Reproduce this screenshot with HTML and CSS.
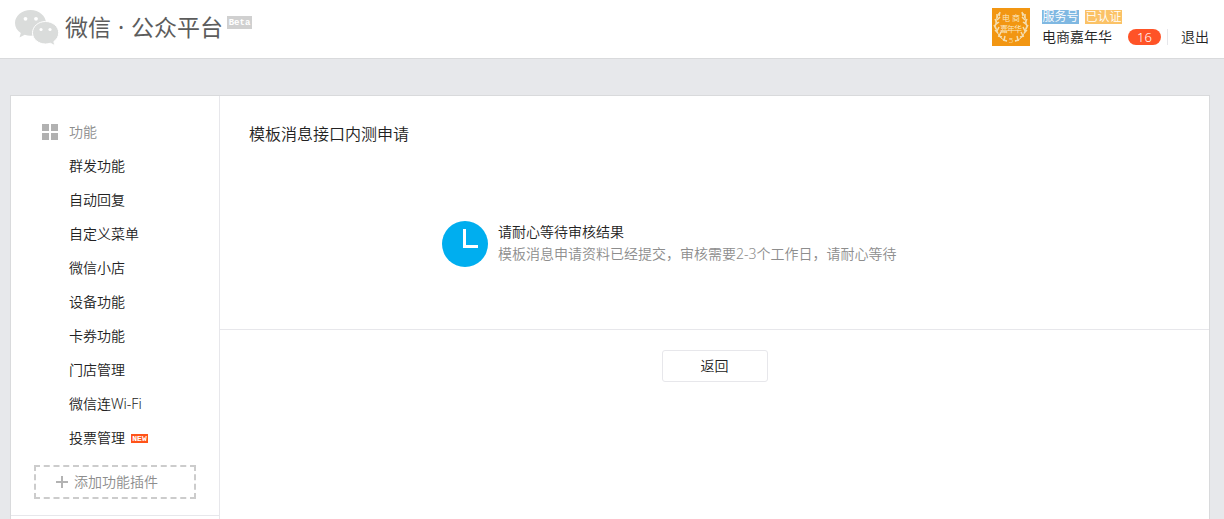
FILE: index.html
```html
<!DOCTYPE html>
<html lang="zh-CN">
<head>
<meta charset="utf-8">
<title>微信公众平台</title>
<link rel="stylesheet" href="styles.css">
</head>
<body>
<header class="header">
  <a class="logo" href="#">
    <svg class="logo-icon" viewBox="0 0 44 36" aria-hidden="true">
      <path fill="#dadcdb" d="M15.500 0C7 0 0 5.800 0 13c0 4.100 2.200 7.600 5.800 10L4.500 27.500l5.200-2.700c1.900.6 3.800.9 5.800.9C24 25.700 31 20 31 13S24 0 15.500 0z"/>
      <path fill="#dadcdb" stroke="#fff" stroke-width="1" d="M30.500 11.500c-7.200 0-13 5-13 11.300S23.300 34 30.500 34c1.700 0 3.300-.3 4.800-.8l4.700 2.500-1.200-4.100c3-2.100 4.900-5.200 4.900-8.800 0-6.300-6-11.300-13.200-11.300z"/>
      <g fill="#fff"><circle cx="10.500" cy="8.800" r="1.900"/><circle cx="21" cy="8.800" r="1.900"/><circle cx="26" cy="19.500" r="1.600"/><circle cx="35" cy="19.500" r="1.600"/></g>
    </svg>
    <span class="logo-name">微信</span><span class="logo-dot">·</span><span class="logo-name">公众平台</span>
    <span class="beta">Beta</span>
  </a>
  <div class="account">
    <svg class="avatar" viewBox="0 0 38 38" role="img" aria-label="电商嘉年华">
      <rect width="38" height="38" fill="#f29612"/>
      <g class="avatar-text">
        <text x="14" y="13">电</text><text x="24" y="13">商</text>
        <text x="12" y="24">嘉</text><text x="19" y="24">年</text><text x="26" y="24">华</text>
        <text x="19" y="35">5</text>
      </g>
      <g stroke="#f5deb0" fill="none">
        <path stroke-width="1" d="M7 5Q-1 19 9 30q2 2 6 3M31 5q8 14-2 25-2 2-6 3"/>
        <path stroke-width="1.500" d="M8 4L7 8M5 6v4M8 9l-3 3M3 11l2 4M7 14l-4 3M2 17l2 4M7 19l-2 4M3 22l3 3M9 24l-2 4M6 28l4 1M13 28l-1 4M11 32l4 1M30 4l1 4M33 6v4M30 9l3 3M35 11l-2 4M31 14l4 3M36 17l-2 4M31 19l2 4M35 22l-3 3M29 24l2 4M32 28l-4 1M25 28l1 4M27 32l-4 1"/>
      </g>
    </svg>
    <div class="account-info">
      <div class="tags"><span class="tag tag-service">服务号</span><span class="tag tag-verified">已认证</span></div>
      <div class="account-line">
        <a class="nickname" href="#">电商嘉年华</a>
        <a class="count" href="#">16</a>
        <a class="logout" href="#">退出</a>
      </div>
    </div>
  </div>
</header>
<div class="page">
  <div class="panel">
    <aside class="sidebar">
      <nav class="menu">
        <div class="menu-title">
          <svg class="menu-icon" viewBox="0 0 16 16" aria-hidden="true"><path fill="#b1b1b1" d="M0 0h7v7H0zM9 0h7v7H9zM0 9h7v7H0zM9 9h7v7H9z"/></svg>
          功能
        </div>
        <a href="#">群发功能</a>
        <a href="#">自动回复</a>
        <a href="#">自定义菜单</a>
        <a href="#">微信小店</a>
        <a href="#">设备功能</a>
        <a href="#">卡券功能</a>
        <a href="#">门店管理</a>
        <a href="#">微信连Wi-Fi</a>
        <a href="#">投票管理<span class="new">NEW</span></a>
      </nav>
      <a class="add-plugin" href="#">
        <svg class="add-icon" viewBox="0 0 12 12" aria-hidden="true"><path stroke="#b3b3b3" stroke-width="2" d="M6 0v12M0 6h12"/></svg>
        添加功能插件
      </a>
    </aside>
    <main class="main">
      <h1 class="title">模板消息接口内测申请</h1>
      <section class="message">
        <svg class="clock" viewBox="0 0 46 46" aria-hidden="true"><circle cx="23" cy="23" r="23" fill="#00aeef"/><path fill="none" stroke="#fff" stroke-width="3" d="M22.500 8v17.500H36"/></svg>
        <div class="message-text">
          <h2>请耐心等待审核结果</h2>
          <p>模板消息申请资料已经提交，审核需要2-3个工作日，请耐心等待</p>
        </div>
      </section>
      <div class="actions"><button class="back" type="button">返回</button></div>
    </main>
  </div>
</div>
</body>
</html>
```
FILE: styles.css
```css
* { box-sizing: border-box; }
body {
  margin: 0;
  min-height: 100vh;
  display: flex;
  flex-direction: column;
  background: #e7e8eb;
  color: #222;
  font: 350 14px/22px "Noto Sans", "Noto Sans CJK SC", sans-serif;
}
a { color: inherit; text-decoration: none; }
h1, h2, p { margin: 0; font-size: 14px; font-weight: inherit; }

.header {
  display: flex;
  justify-content: space-between;
  align-items: flex-start;
  padding: 8px 15px 0 15px;
  height: 59px;
  background: #fff;
  border-bottom: 1px solid #d9dadc;
}
.logo { display: flex; align-items: flex-start; padding-top: 2px; color: #5c5c5c; }
.logo-icon { width: 44px; height: 36px; margin-right: 6px; }
.logo-name, .logo-dot { font-size: 23px; line-height: 34px; font-weight: 400; }
.logo-dot { width: 20px; text-align: center; }
.beta {
  margin: 6px 0 0 4px;
  width: 25px;
  height: 13px;
  background: #d0d0d0;
  color: #fff;
  font: bold 9px/14px "Liberation Mono", monospace;
  text-align: center;
}

.account { display: flex; gap: 12px; }
.avatar { width: 38px; height: 38px; }
.avatar-text { fill: #fbe9c4; font-size: 8px; text-anchor: middle; }
.tags { display: flex; gap: 6px; padding-top: 2px; }
.tag { width: 37px; height: 14px; color: #fff; font-size: 12px; line-height: 14px; text-align: center; }
.tag-service { background: #7fb8e2; }
.tag-verified { background: #fbc266; }
.account-line { display: flex; align-items: center; height: 26px; }
.count {
  width: 33px;
  height: 16px;
  margin: 0 6px 0 16px;
  border-radius: 8px;
  background: #ff5327;
  color: #fff;
  font-size: 13px;
  line-height: 16px;
  text-align: center;
}
.logout { padding-left: 13px; border-left: 1px solid #e7e7eb; line-height: 16px; }

.page { flex: 1; display: flex; padding: 36px 14px 0 10px; }
.panel {
  flex: 1;
  display: flex;
  background: #fff;
  border: 1px solid #d9dadc;
  border-bottom: 0;
}
.sidebar { width: 209px; border-right: 1px solid #e7e7eb; }
.menu { padding-top: 19px; }
.menu-title, .menu a { display: flex; align-items: center; height: 34px; padding-left: 58px; }
.menu .menu-title { padding-left: 31px; color: #8d8d8d; }
.menu-icon { width: 16px; height: 16px; margin-right: 11px; }
.new {
  width: 17px;
  height: 9px;
  margin-left: 6px;
  background: #ff5319;
  color: #fff;
  font: bold 8px/10px "Liberation Mono", monospace;
  text-align: center;
}
.add-plugin {
  display: flex;
  align-items: center;
  height: 34px;
  margin: 10px 23px 16px;
  padding-left: 20px;
  border: 2px dashed #ccc;
  color: #8d8d8d;
}
.add-icon { width: 12px; height: 12px; margin-right: 6px; }
.sidebar::after { content: ""; display: block; border-top: 1px solid #e7e7eb; }

.main { flex: 1; }
.title { padding: 26px 29px 0; font-size: 16px; line-height: 24px; }
.message {
  display: flex;
  gap: 10px;
  padding: 75px 30px 62px 222px;
  border-bottom: 1px solid #e7e7eb;
}
.clock { width: 46px; height: 46px; flex: none; }
.message-text p { color: #8d8d8d; }
.actions { padding-top: 20px; text-align: center; }
.back {
  width: 106px;
  height: 32px;
  padding: 0;
  border: 1px solid #e7e7eb;
  border-radius: 3px;
  background: #fff;
  color: #222;
  font: inherit;
}
```
